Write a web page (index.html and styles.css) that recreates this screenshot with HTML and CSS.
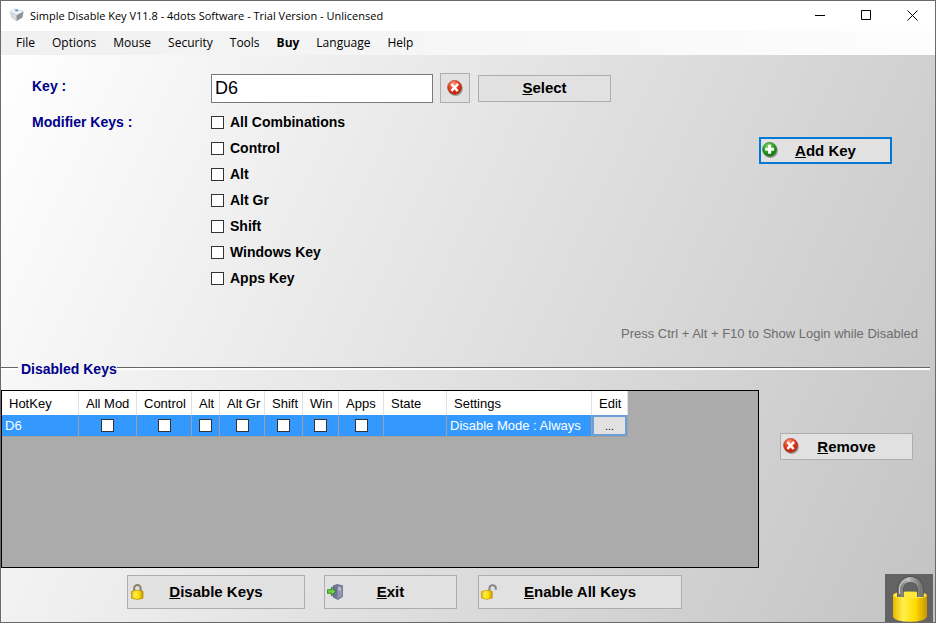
FILE: index.html
```html
<!DOCTYPE html>
<html lang="en">
<head>
	<meta charset="UTF-8">
	<meta name="viewport" content="width=device-width, initial-scale=1">
	<title>Simple Disable Key V11.8 - 4dots Software - Trial Version - Unlicensed</title>
	<link rel="stylesheet" href="styles.css">
</head>
<body>
	<!-- Shared icons -->
	<svg class="defs" aria-hidden="true">
		<defs>
			<radialGradient id="redBall" cx="40%" cy="25%" r="75%">
				<stop offset="0" stop-color="#ff9a80"/>
				<stop offset="0.5" stop-color="#e8401f"/>
				<stop offset="1" stop-color="#b81c08"/>
			</radialGradient>
			<radialGradient id="greenBall" cx="40%" cy="25%" r="75%">
				<stop offset="0" stop-color="#8ada70"/>
				<stop offset="0.5" stop-color="#2ca420"/>
				<stop offset="1" stop-color="#0e720c"/>
			</radialGradient>
			<linearGradient id="gold" x1="0" x2="1">
				<stop offset="0" stop-color="#e8b800"/>
				<stop offset="0.3" stop-color="#fff04a"/>
				<stop offset="0.65" stop-color="#ffdc00"/>
				<stop offset="1" stop-color="#c89400"/>
			</linearGradient>
			<linearGradient id="steel" x1="0" x2="1">
				<stop offset="0" stop-color="#777"/>
				<stop offset="0.4" stop-color="#bbb"/>
				<stop offset="1" stop-color="#777"/>
			</linearGradient>
			<symbol id="cross" viewBox="0 0 16 16">
				<circle cx="8.6" cy="8.8" r="7.2" fill="#000" opacity="0.3"/>
				<circle cx="7.6" cy="7.4" r="7" fill="url(#redBall)" stroke="#a8402c" stroke-width="0.7"/>
				<path d="M5.3 5l4.6 5.2M10.2 4.8l-5 5.2" stroke="#fff" stroke-width="2.4" stroke-linecap="square"/>
			</symbol>
			<symbol id="plus" viewBox="0 0 16 16">
				<circle cx="8.6" cy="8.8" r="7.2" fill="#000" opacity="0.3"/>
				<circle cx="7.6" cy="7.4" r="7" fill="url(#greenBall)" stroke="#2e7a28" stroke-width="0.7"/>
				<path d="M7.6 2.8v9M3.1 7.3h9" stroke="#fff" stroke-width="3"/>
			</symbol>
			<symbol id="lock" viewBox="0 0 16 16">
				<path d="M4.2 8V4.1a3.2 3.1 0 0 1 6.4 0V8" fill="none" stroke="#858068" stroke-width="2"/>
				<path d="M1.6 7.2q5.6-1.8 11.4 0v7q-5.6 2.4-11.4 0z" fill="url(#gold)" stroke="#b08400" stroke-width="0.7"/>
			</symbol>
			<symbol id="unlock" viewBox="0 0 16 16">
				<path d="M8.4 8.2V4.2q.2-3 3.2-3t3.2 2.9v1.7" fill="none" stroke="#888" stroke-width="2"/>
				<path d="M.6 7.4q5.2-1.8 10.6 0v6.6q-5.2 2.6-10.6 0z" fill="url(#gold)" stroke="#c09000" stroke-width="0.7"/>
			</symbol>
			<symbol id="door" viewBox="0 0 16 16">
				<path d="M6 2l4-1.5 5.5 1.2v11l-4.6 2.8L6 13z" fill="#6f7391" stroke="#50546c" stroke-width="0.6"/>
				<path d="M10.4 1.8l4.8.6v10l-4.8 2.6z" fill="#9094b4"/>
				<path d="M11.3 3.6h2.4v2.8h-2.4z" fill="#c5c9dc"/>
				<path d="M.4 5.8h4V3.2L8.8 7.6l-4.4 4.2V9.2h-4z" fill="#72cf48" stroke="#247d1c" stroke-width="0.9"/>
			</symbol>
		</defs>
	</svg>

	<div class="window">
		<header class="titlebar">
			<svg class="app-icon" viewBox="0 0 16 16" aria-hidden="true">
				<path d="M1 4.5l6.6 3.5v6L2.6 10.6z" fill="#d8dade" stroke="#b4b4b4" stroke-width="0.4"/>
				<path d="M7.6 8l7-3.5-1.2 6L7.6 14z" fill="#8e9196"/>
				<path d="M1 4.5l4.4-3 9.2 2.6L7.6 8z" fill="#eef2f7" stroke="#c4c8ce" stroke-width="0.4"/>
				<path d="M5.6 2.8l3.2-.4.8 1.4-2.6.8z" fill="#4a92d2"/>
			</svg>
			<span class="caption">Simple Disable Key V11.8 - 4dots Software - Trial Version - Unlicensed</span>
			<button class="sysbtn" aria-label="Minimize"><svg viewBox="0 0 11 11"><path d="M0 5.5h10"/></svg></button>
			<button class="sysbtn" aria-label="Maximize"><svg viewBox="0 0 11 11"><path d="M.5.5h9v9h-9z"/></svg></button>
			<button class="sysbtn" aria-label="Close"><svg viewBox="0 0 11 11"><path d="M.5.5l10 10M10.5.5l-10 10"/></svg></button>
		</header>

		<nav class="menubar">
			<button>File</button>
			<button>Options</button>
			<button>Mouse</button>
			<button>Security</button>
			<button>Tools</button>
			<button class="buy">Buy</button>
			<button>Language</button>
			<button>Help</button>
		</nav>

		<main>
			<section class="editor">
				<label class="field-label" for="keyInput">Key :</label>
				<div class="key-row">
					<input id="keyInput" type="text" value="D6">
					<button class="btn clear" aria-label="Clear"><svg class="icon"><use href="#cross"/></svg></button>
					<button class="btn short plain"><span><u>S</u>elect</span></button>
				</div>

				<span class="field-label" id="modLabel">Modifier Keys :</span>
				<div class="modifiers" role="group" aria-labelledby="modLabel">
					<label><input type="checkbox">All Combinations</label>
					<label><input type="checkbox">Control</label>
					<label><input type="checkbox">Alt</label>
					<label><input type="checkbox">Alt Gr</label>
					<label><input type="checkbox">Shift</label>
					<label><input type="checkbox">Windows Key</label>
					<label><input type="checkbox">Apps Key</label>
				</div>
				<button class="btn short add"><svg class="icon"><use href="#plus"/></svg><span><u>A</u>dd Key</span></button>
			</section>

			<p class="hint">Press Ctrl + Alt + F10 to Show Login while Disabled</p>

			<h2 class="group-title">Disabled Keys</h2>

			<section class="list">
				<div class="grid-view">
					<table>
						<colgroup>
							<col class="c-hotkey"><col class="c-all"><col class="c-control"><col class="c-alt"><col class="c-altgr"><col class="c-shift"><col class="c-win"><col class="c-apps"><col class="c-state"><col class="c-settings"><col class="c-edit">
						</colgroup>
						<thead>
							<tr>
								<th>HotKey</th><th>All Mod</th><th>Control</th><th>Alt</th><th>Alt Gr</th><th>Shift</th><th>Win</th><th>Apps</th><th>State</th><th>Settings</th><th>Edit</th>
							</tr>
						</thead>
						<tbody>
							<tr>
								<td>D6</td>
								<td class="check"><input type="checkbox" aria-label="All Mod"></td>
								<td class="check"><input type="checkbox" aria-label="Control"></td>
								<td class="check"><input type="checkbox" aria-label="Alt"></td>
								<td class="check"><input type="checkbox" aria-label="Alt Gr"></td>
								<td class="check"><input type="checkbox" aria-label="Shift"></td>
								<td class="check"><input type="checkbox" aria-label="Win"></td>
								<td class="check"><input type="checkbox" aria-label="Apps"></td>
								<td></td>
								<td>Disable Mode : Always</td>
								<td class="edit"><button>...</button></td>
							</tr>
						</tbody>
					</table>
				</div>
				<div class="side">
					<button class="btn short"><svg class="icon"><use href="#cross"/></svg><span><u>R</u>emove</span></button>
				</div>
			</section>

			<footer class="actions">
				<button class="btn disable"><svg class="icon"><use href="#lock"/></svg><span><u>D</u>isable Keys</span></button>
				<button class="btn exit"><svg class="icon"><use href="#door"/></svg><span><u>E</u>xit</span></button>
				<button class="btn enable"><svg class="icon"><use href="#unlock"/></svg><span><u>E</u>nable All Keys</span></button>
				<svg class="big-lock" viewBox="0 0 48 48" aria-hidden="true">
					<path d="M0 0h48v48H0z" fill="#636363"/>
					<path d="M8 21.5Q8 17.5 25 17.5t17 4V43q-2 4.8-17 4.8T8 43z" fill="url(#gold)"/>
					<ellipse cx="25" cy="21.4" rx="16.6" ry="3.4" fill="#ffe93c"/>
					<path d="M15.4 23V15a10 9.6 0 0 1 20 0v8" fill="none" stroke="#505050" stroke-width="6.6"/>
					<path d="M15.4 23V15a10 9.6 0 0 1 20 0v8" fill="none" stroke="url(#steel)" stroke-width="5"/>
					<path d="M14.6 20V15a10.6 10.2 0 0 1 10-10.2" fill="none" stroke="#ccc" stroke-width="1.2"/>
				</svg>
			</footer>
		</main>
	</div>
</body>
</html>
```
FILE: styles.css
```css
* {
	box-sizing: border-box;
}
body {
	margin: 0;
	font-family: "Liberation Sans", Arial, sans-serif;
	font-size: 13px;
	color: #000;
}
button {
	font: inherit;
	color: inherit;
	padding: 0;
}
.defs {
	position: absolute;
	width: 0;
	height: 0;
}
.window {
	display: flex;
	flex-direction: column;
	min-height: 100vh;
	border: 1px solid #6c6a6e;
}

/* Title bar and menu */
.titlebar {
	display: flex;
	align-items: center;
	height: 30px;
	padding: 0 0 2px 8px;
	background: #fff;
	font-family: "Open Sans", sans-serif;
	font-size: 11px;
}
.app-icon {
	width: 16px;
	height: 16px;
	margin-right: 5px;
}
.caption {
	flex: 1;
	white-space: nowrap;
}
.sysbtn {
	width: 46px;
	height: 28px;
	border: 0;
	background: none;
}
.sysbtn svg {
	display: block;
	width: 11px;
	height: 11px;
	margin: 0 auto;
	fill: none;
	stroke: #000;
}
.menubar {
	display: flex;
	gap: 1px;
	height: 24px;
	padding: 0 0 2px 7px;
	background: linear-gradient(to right, #f0f0f0, #fdfdfd);
	font-family: "Open Sans", sans-serif;
	font-size: 12px;
}
.menubar button {
	padding: 0 8px;
	border: 0;
	background: none;
}
.menubar .buy {
	font-weight: bold;
}

/* Key editor */
main {
	flex: 1;
	display: flex;
	flex-direction: column;
	background: linear-gradient(115deg, #fff, #c3c3c3);
}
.editor {
	display: grid;
	grid-template-columns: 178px 1fr auto;
	row-gap: 6px;
	padding: 18px 43px 0 31px;
	font-size: 14px;
	font-weight: bold;
}
.field-label {
	color: #00008b;
	line-height: 26px;
}
.key-row {
	display: flex;
	align-items: center;
	grid-column: 2 / 4;
}
.key-row input {
	width: 222px;
	height: 29px;
	margin-left: 1px;
	padding: 0 3px;
	border: 1px solid #7a7a7a;
	background: #fff;
	font-family: inherit;
	font-size: 18px;
}
input[type="checkbox"] {
	appearance: none;
	width: 13px;
	height: 13px;
	margin: 0;
	border: 1px solid #333;
	background: #fff;
}
.modifiers {
	display: flex;
	flex-direction: column;
	align-items: flex-start;
	padding-left: 1px;
}
.modifiers label {
	display: flex;
	align-items: center;
	gap: 6px;
	height: 26px;
}

/* Buttons */
.btn {
	display: grid;
	grid-template-columns: 16px 1fr 16px;
	align-items: center;
	height: 34px;
	padding: 0 2px 1px;
	border: 1px solid #adadad;
	background: #e1e1e1;
	font-size: 15px;
	font-weight: bold;
	text-align: center;
}
.btn.short {
	width: 133px;
	height: 27px;
}
.btn.plain {
	display: block;
}
.btn.clear {
	display: block;
	width: 30px;
	height: 30px;
	margin: 0 8px 0 7px;
}
.btn.add {
	align-self: start;
	margin-top: 28px;
	padding: 0 1px 1px;
	border: 2px solid #0078d7;
}
.icon {
	display: block;
	width: 16px;
	height: 16px;
}
.clear .icon {
	margin: 0 auto;
}

.hint {
	margin: 35px 17px 0;
	color: #6d6d6d;
	line-height: 16px;
	text-align: right;
}

/* Disabled keys list */
.group-title {
	display: flex;
	align-items: center;
	margin: 19px 5px 13px 0;
	color: #00008b;
	font-size: 14px;
	line-height: 16px;
}
.group-title::before,
.group-title::after {
	content: "";
	height: 2px;
	margin-bottom: 2px;
	border-top: 1px solid #666;
	background: #fff;
}
.group-title::before {
	width: 17px;
	margin-right: 3px;
}
.group-title::after {
	flex: 1;
}
.list {
	flex: 1;
	display: flex;
	min-height: 178px;
}
.grid-view {
	flex: 1;
	border: 1px solid #000;
	background: #ababab;
}
.side {
	width: 176px;
	padding: 43px 0 0 21px;
}
table {
	table-layout: fixed;
	width: 626px;
	border-collapse: separate;
	border-spacing: 0;
}
th {
	height: 24px;
	padding: 0 0 0 7px;
	border-right: 1px solid #e0e0e0;
	background: #fff;
	font-weight: normal;
	text-align: left;
	white-space: nowrap;
}
td {
	height: 22px;
	padding: 0 3px;
	border-right: 1px solid #a0a0a0;
	border-bottom: 1px solid #a0a0a0;
	background: #3399ff;
	color: #fff;
	white-space: nowrap;
}
.check {
	padding: 0;
	text-align: center;
}
.check input {
	display: block;
	margin: 0 auto;
}
.edit {
	padding: 0;
}
.edit button {
	display: block;
	width: 100%;
	height: 21px;
	border: 2px solid #6a9fd8;
	background: #e1e1e1;
	color: #000;
	font-size: 11px;
}
.c-hotkey { width: 77px; }
.c-all { width: 58px; }
.c-control { width: 55px; }
.c-alt { width: 28px; }
.c-altgr { width: 45px; }
.c-shift { width: 38px; }
.c-win { width: 36px; }
.c-apps { width: 45px; }
.c-state { width: 63px; }
.c-settings { width: 145px; }
.c-edit { width: 36px; }

/* Bottom buttons */
.actions {
	display: flex;
	align-items: center;
	padding: 6px 2px 0 126px;
}
.actions .btn {
	margin-bottom: 12px;
}
.disable {
	width: 178px;
	margin-right: 19px;
}
.exit {
	width: 133px;
	margin-right: 21px;
}
.enable {
	width: 204px;
}
.big-lock {
	display: block;
	width: 48px;
	height: 48px;
	margin-left: auto;
}
```
